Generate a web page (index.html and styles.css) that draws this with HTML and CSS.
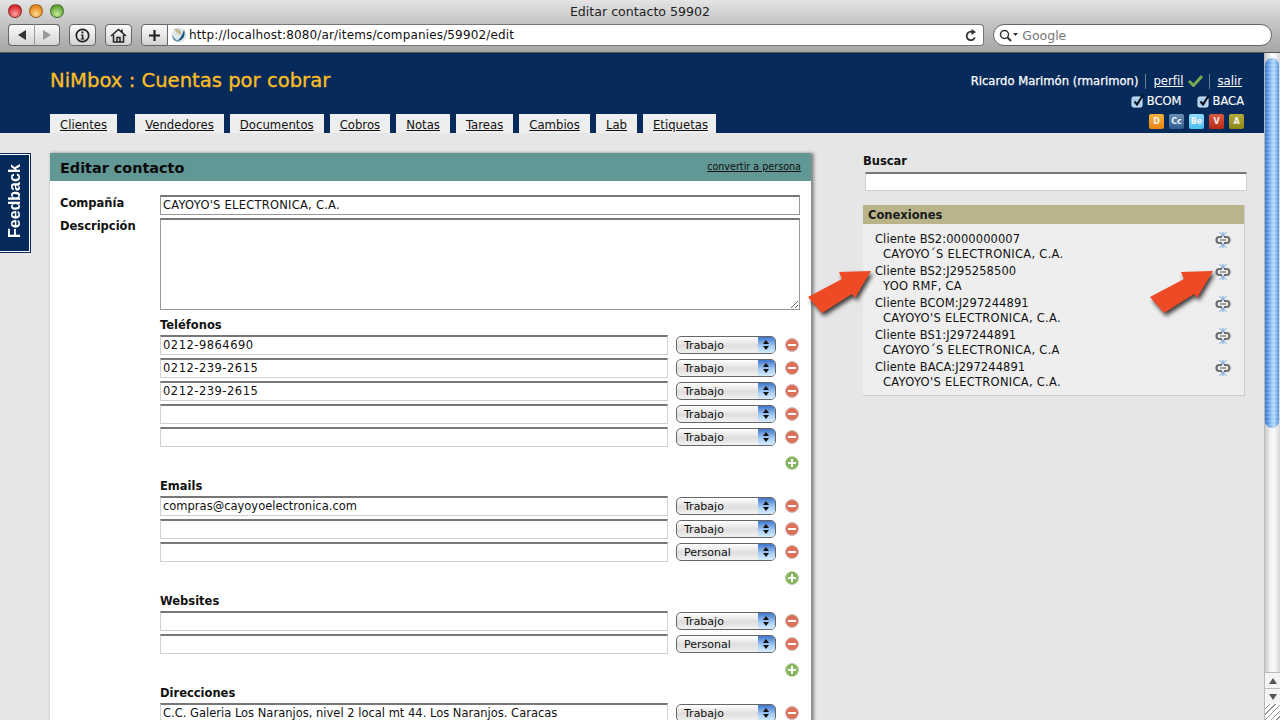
FILE: index.html
```html
<!DOCTYPE html>
<html lang="es">
<head>
    <meta charset="UTF-8">
    <title>Editar contacto 59902</title>
    <link rel="stylesheet" href="styles.css">
</head>
<body>
    <div class="chrome">
        <div class="titlebar">
            <span class="light red"></span>
            <span class="light orange"></span>
            <span class="light green"></span>
            <span class="wintitle">Editar contacto 59902</span>
        </div>
        <div class="toolbar">
            <div class="btn-group">
                <span class="tbtn back"><svg width="12" height="12" viewBox="0 0 12 12"><path d="M2 6 10 1V11Z" fill="#333"/></svg></span>
                <span class="tbtn fwd"><svg width="12" height="12" viewBox="0 0 12 12"><path d="M10 6 2 1V11Z" fill="#999"/></svg></span>
            </div>
            <span class="tbtn single"><svg width="15" height="15" viewBox="0 0 15 15"><circle cx="7.5" cy="7.5" r="6.2" fill="none" stroke="#222" stroke-width="1.7"/><circle cx="7.5" cy="4.4" r="1.1" fill="#222"/><path d="M5.8 6.4H8.4V10.5H9.5V11.5H5.6V10.5H6.8V7.4H5.8Z" fill="#222"/></svg></span>
            <span class="tbtn single"><svg width="17" height="15" viewBox="0 0 17 15"><path d="M1 8 8.5 1.5 16 8M3.5 7V14H13.5V7M7 14V9.5H10V14M12 1.5V4" fill="none" stroke="#222" stroke-width="1.5"/></svg></span>
            <div class="addr">
                <span class="tbtn plus"><svg width="13" height="13" viewBox="0 0 13 13"><path d="M6.5 1V12M1 6.5H12" stroke="#222" stroke-width="2.2"/></svg></span>
                <div class="urlfield">
                    <svg class="favicon" width="16" height="16" viewBox="0 0 16 16"><circle cx="8" cy="8" r="7.5" fill="#dfe6ea"/><path d="M3 2C7 1 11 3 10 8 7 7 5 5 3 2Z" fill="#c2b98c"/><path d="M13 3C15 8 12 14 6 14 9 12 11 9 13 3Z" fill="#1c4f86"/><path d="M1.5 8C3 11 5 13 8 14.500 4 15 1 12 1.500 8Z" fill="#5b93a8"/></svg>
                    <span class="url">http://localhost:8080/ar/items/companies/59902/edit</span>
                    <svg class="reload" width="12" height="13" viewBox="0 0 12 13"><path d="M9.800 8.500A4.200 4.200 0 1 1 7.500 3" fill="none" stroke="#333" stroke-width="1.900"/><path d="M6.500 0 11 3 6.500 6Z" fill="#333"/></svg>
                </div>
            </div>
            <div class="searchfield">
                <svg width="20" height="13" viewBox="0 0 20 13"><circle cx="5.500" cy="5.500" r="4" fill="none" stroke="#333" stroke-width="1.500"/><path d="M8.500 8.500 12 12" stroke="#333" stroke-width="2"/><path d="M14 4H19L16.500 7Z" fill="#333"/></svg>
                <span>Google</span>
            </div>
        </div>
    </div>

    <div class="window">
        <div class="viewport">
            <header class="header">
                <div class="head-left">
                    <h1>NiMbox : Cuentas por cobrar</h1>
                    <nav class="tabs">
                        <a class="tab first">Clientes</a>
                        <a class="tab">Vendedores</a>
                        <a class="tab">Documentos</a>
                        <a class="tab">Cobros</a>
                        <a class="tab">Notas</a>
                        <a class="tab">Tareas</a>
                        <a class="tab">Cambios</a>
                        <a class="tab">Lab</a>
                        <a class="tab">Etiquetas</a>
                    </nav>
                </div>
                <div class="head-right">
                    <div class="userline">
                        <span class="username">Ricardo Marimón (rmarimon)</span>
                        <span class="sep"></span>
                        <a>perfil</a>
                        <svg class="okmark" width="15" height="13" viewBox="0 0 15 13"><path d="M1 7 5.500 11.500 14 2" fill="none" stroke="#7ba653" stroke-width="3"/></svg>
                        <span class="sep"></span>
                        <a>salir</a>
                    </div>
                    <div class="banks">
                        <span class="bank"><svg width="14" height="14" viewBox="0 0 14 14"><rect x="1" y="3" width="10" height="10" rx="1.500" fill="#a5cdf0" stroke="#dfeefa"/><path d="M3.500 7.500 6 10.500 12 1" fill="none" stroke="#0b0f18" stroke-width="2"/></svg>BCOM</span>
                        <span class="bank"><svg width="14" height="14" viewBox="0 0 14 14"><rect x="1" y="3" width="10" height="10" rx="1.500" fill="#a5cdf0" stroke="#dfeefa"/><path d="M3.500 7.500 6 10.500 12 1" fill="none" stroke="#0b0f18" stroke-width="2"/></svg>BACA</span>
                    </div>
                    <div class="badges">
                        <span class="badge b-d">D</span>
                        <span class="badge b-c">Cc</span>
                        <span class="badge b-b">Be</span>
                        <span class="badge b-v">V</span>
                        <span class="badge b-a">A</span>
                    </div>
                </div>
            </header>

            <div class="page">
                <main class="card">
                    <div class="card-head">
                        <h2>Editar contacto</h2>
                        <a>convertir a persona</a>
                    </div>
                    <div class="form">
                        <div class="field">
                            <label>Compañía</label>
                            <input class="wide solid" value="CAYOYO'S ELECTRONICA, C.A.">
                        </div>
                        <div class="field">
                            <label>Descripción</label>
                            <textarea class="wide solid"></textarea>
                        </div>

                        <div class="group">
                            <h3>Teléfonos</h3>
                            <div class="row"><input class="tel" value="0212-9864690"><span class="sel">Trabajo<i></i></span><span class="round minus"></span></div>
                            <div class="row"><input class="tel" value="0212-239-2615"><span class="sel">Trabajo<i></i></span><span class="round minus"></span></div>
                            <div class="row"><input class="tel" value="0212-239-2615"><span class="sel">Trabajo<i></i></span><span class="round minus"></span></div>
                            <div class="row"><input><span class="sel">Trabajo<i></i></span><span class="round minus"></span></div>
                            <div class="row"><input><span class="sel">Trabajo<i></i></span><span class="round minus"></span></div>
                            <div class="addrow"><span class="round add"></span></div>
                        </div>

                        <div class="group">
                            <h3>Emails</h3>
                            <div class="row"><input value="compras@cayoyoelectronica.com"><span class="sel">Trabajo<i></i></span><span class="round minus"></span></div>
                            <div class="row"><input><span class="sel">Trabajo<i></i></span><span class="round minus"></span></div>
                            <div class="row"><input><span class="sel">Personal<i></i></span><span class="round minus"></span></div>
                            <div class="addrow"><span class="round add"></span></div>
                        </div>

                        <div class="group">
                            <h3>Websites</h3>
                            <div class="row"><input><span class="sel">Trabajo<i></i></span><span class="round minus"></span></div>
                            <div class="row"><input><span class="sel">Personal<i></i></span><span class="round minus"></span></div>
                            <div class="addrow"><span class="round add"></span></div>
                        </div>

                        <div class="group">
                            <h3>Direcciones</h3>
                            <div class="row"><input value="C.C. Galeria Los Naranjos, nivel 2 local mt 44. Los Naranjos. Caracas"><span class="sel">Trabajo<i></i></span><span class="round minus"></span></div>
                        </div>
                    </div>
                </main>

                <aside class="side">
                    <label class="search-label">Buscar</label>
                    <input class="search-input">
                    <section class="conn">
                        <h4>Conexiones</h4>
                        <ul>
                            <li><div>Cliente BS2:0000000007<span>CAYOYO´S ELECTRONICA, C.A.</span></div><svg class="chain"><use href="#chain"/></svg></li>
                            <li><div>Cliente BS2:J295258500<span>YOO RMF, CA</span></div><svg class="chain"><use href="#chain"/></svg></li>
                            <li><div>Cliente BCOM:J297244891<span>CAYOYO'S ELECTRONICA, C.A.</span></div><svg class="chain"><use href="#chain"/></svg></li>
                            <li><div>Cliente BS1:J297244891<span>CAYOYO´S ELECTRONICA, C.A</span></div><svg class="chain"><use href="#chain"/></svg></li>
                            <li><div>Cliente BACA:J297244891<span>CAYOYO'S ELECTRONICA, C.A.</span></div><svg class="chain"><use href="#chain"/></svg></li>
                        </ul>
                    </section>
                </aside>
            </div>
        </div>

        <div class="scrollbar">
            <div class="thumb"></div>
            <div class="sb-btn"><b class="up"></b></div>
            <div class="sb-btn"><b class="down"></b></div>
            <div class="grip"></div>
        </div>
    </div>

    <!-- anotaciones sobre la captura -->
    <a class="feedback">Feedback</a>
    <svg class="arrow arrow-left" width="70" height="50" viewBox="0 0 70 50"><path d="M65 3 33 4 36 11 2 29 16 45 46 26 49 30Z" fill="#ef4a26"/></svg>
    <svg class="arrow arrow-right" width="70" height="50" viewBox="0 0 70 50"><path d="M65 3 33 4 36 11 2 29 16 45 46 26 49 30Z" fill="#ef4a26"/></svg>

    <svg width="0" height="0" class="defs">
        <symbol id="chain" viewBox="0 0 16 16">
            <path d="M4.500 0.500 11.500 5M11.500 0.500 4.500 5M8 0V5M4.500 11 11.500 15.500M11.500 11 4.500 15.500M8 11V16" fill="none" stroke="#7fa6e0" stroke-width="1"/>
            <path d="M7 5H4.500A3 3 0 0 0 4.500 11H7M9 5H11.500A3 3 0 0 1 11.500 11H9" fill="none" stroke="#6f6f6f" stroke-width="2.200"/>
            <path d="M5 8H11" stroke="#777" stroke-width="1.300"/>
        </symbol>
    </svg>
</body>
</html>
```

FILE: styles.css
```css
* {
    box-sizing: border-box;
}
html, body {
    margin: 0;
    height: 720px;
    overflow: hidden;
}
body {
    font-family: 'DejaVu Sans', sans-serif;
    font-size: 11.5px;
    color: #111;
    background: #e6e6e6;
    position: relative;
}
a {
    text-decoration: underline;
    color: inherit;
}

/* ventana del navegador */
.chrome {
    height: 53px;
    background: linear-gradient(#e4e4e4, #c4c4c4 45%, #a6a6a6);
    border-bottom: 1px solid #555;
    border-radius: 4px 4px 0 0;
}
.titlebar {
    height: 23px;
    position: relative;
    display: flex;
    align-items: center;
    gap: 7px;
    padding: 0 0 1px 8px;
}
.light {
    width: 14px;
    height: 14px;
    border-radius: 50%;
    border: 1px solid rgba(0, 0, 0, 0.35);
}
.red { background: radial-gradient(circle at 50% 75%, #f9a0a0, #d92c2c 70%); }
.orange { background: radial-gradient(circle at 50% 75%, #fbd98c, #e8861c 70%); }
.green { background: radial-gradient(circle at 50% 75%, #c7ea9b, #62a637 70%); }
.wintitle {
    position: absolute;
    left: 0;
    right: 0;
    text-align: center;
    font-size: 12.6px;
    color: #222;
}
.toolbar {
    height: 23px;
    display: flex;
    align-items: center;
    padding: 1px 8px 0;
    gap: 9px;
}
.tbtn {
    display: flex;
    align-items: center;
    justify-content: center;
    height: 22px;
    border: 1px solid #666;
    border-radius: 4px;
    background: linear-gradient(#fafafa, #d4d4d4);
}
.btn-group {
    display: flex;
}
.back {
    width: 27px;
    border-radius: 4px 0 0 4px;
    border-right: 1px solid #999;
}
.fwd {
    width: 25px;
    border-left: 0;
    border-radius: 0 4px 4px 0;
}
.single {
    width: 27px;
}
.addr {
    display: flex;
    width: 844px;
}
.plus {
    width: 27px;
    border-radius: 4px 0 0 4px;
    flex: none;
}
.urlfield {
    flex: 1;
    height: 22px;
    display: flex;
    align-items: center;
    gap: 2px;
    padding: 0 6px 0 3px;
    background: #fff;
    border: 1px solid #777;
    border-left: 0;
    border-radius: 0 4px 4px 0;
}
.url {
    flex: 1;
    font-size: 12px;
    letter-spacing: 0.15px;
    color: #111;
}
.searchfield {
    width: 279px;
    height: 22px;
    display: flex;
    align-items: center;
    gap: 3px;
    padding: 0 5px;
    background: #fff;
    border: 1px solid #666;
    border-radius: 11px;
    font-size: 12.5px;
    color: #777;
}

.window {
    display: flex;
    height: 667px;
}
.viewport {
    flex: 1;
    min-width: 0;
    overflow: hidden;
}

/* cabecera */
.header {
    height: 80px;
    background: #062a5a;
    display: flex;
    justify-content: space-between;
    padding: 0 20px 0 50px;
}
.head-left {
    display: flex;
    flex-direction: column;
    justify-content: space-between;
}
h1 {
    margin: 17px 0 0;
    font-size: 19.6px;
    line-height: 22px;
    font-weight: normal;
    color: #f9bd25;
    -webkit-text-stroke: 0.35px #f9bd25;
}
.tabs {
    display: flex;
    gap: 6px;
}
.tab {
    height: 19px;
    line-height: 23px;
    padding: 0 10px;
    background: #eee;
    font-size: 11.7px;
    color: #111;
}
.tab.first {
    margin-right: 12px;
}
.tab:last-child {
    padding-right: 8px;
}
.head-right {
    display: flex;
    flex-direction: column;
    align-items: flex-end;
    color: #fff;
}
.userline {
    display: flex;
    align-items: center;
    gap: 7px;
    margin-top: 20px;
    height: 16px;
    padding-right: 2px;
    font-size: 11.7px;
}
.username {
    font-size: 11.6px;
    font-weight: normal;
    -webkit-text-stroke: 0.25px #fff;
}
.okmark {
    margin: -2px -1px 0 -2px;
}
.sep {
    width: 1px;
    height: 15px;
    background: #6f7f8f;
}
.banks {
    display: flex;
    gap: 15px;
    margin-top: 4px;
    height: 16px;
    -webkit-text-stroke: 0.15px #fff;
}
.bank {
    display: flex;
    align-items: center;
    gap: 2px;
}
.badges {
    display: flex;
    gap: 5px;
    margin-top: 5px;
}
.badge {
    width: 15px;
    height: 15px;
    border-radius: 2px;
    font-size: 8px;
    line-height: 15px;
    font-weight: bold;
    text-align: center;
    color: #f2f2f2;
}
.b-d { background: linear-gradient(#f7b03c, #e98512); }
.b-c { background: linear-gradient(#6a8fb8, #2f5c8f); }
.b-b { background: linear-gradient(#8fdcfb, #4bbcf0); }
.b-v { background: linear-gradient(#dc5a3c, #b82a18); }
.b-a { background: linear-gradient(#b3ac3a, #8c8618); }

/* cuerpo */
.page {
    display: flex;
    align-items: flex-start;
    padding: 20px 0 0 50px;
}
.card {
    width: 761px;
    height: 600px;
    flex: none;
    background: #fff;
    box-shadow: 2px 1px 3px 1px #888;
}
.card-head {
    height: 28px;
    display: flex;
    justify-content: space-between;
    align-items: center;
    padding: 1px 10px 0;
    background: #619795;
}
h2 {
    margin: 0;
    font-size: 14.4px;
    font-weight: bold;
    color: #0a0a0a;
}
.card-head a {
    font-size: 9.6px;
    color: #111;
    margin-top: -2px;
}
.form {
    padding: 14px 10px 0;
}
.field {
    display: flex;
    margin-bottom: 3px;
}
.field label {
    width: 100px;
    flex: none;
    font-weight: bold;
    line-height: 17px;
}
input, textarea {
    font: inherit;
    font-size: 11.5px;
    color: #111;
    background: #fff;
    padding: 0 2px 2px;
    border: 1px solid #d0d0d0;
    border-top: 2px solid #777;
    outline: none;
    border-radius: 0;
}
.wide {
    width: 640px;
    height: 20px;
    letter-spacing: 0.24px;
}
.wide.solid {
    border: 1px solid #999;
    border-top: 2px solid #777;
}
textarea.wide {
    height: 92px;
    margin-bottom: 3px;
    display: block;
}
.group {
    margin-left: 100px;
}
h3 {
    margin: 0 0 2px;
    font-size: 11.5px;
    line-height: 16px;
    font-weight: bold;
}
.field + .group {
    margin-top: 4px;
}
.row {
    display: flex;
    align-items: center;
    height: 20px;
    margin-bottom: 3px;
}
.row input {
    width: 508px;
    height: 20px;
    margin-right: 8px;
}
.row input.tel {
    letter-spacing: 0.5px;
}
.sel {
    position: relative;
    width: 100px;
    height: 18px;
    line-height: 17px;
    padding-left: 7px;
    font-size: 11px;
    border: 1px solid #666;
    border-radius: 5px;
    background: linear-gradient(#fff, #dedede 55%, #f2f2f2);
    margin-right: 9px;
    overflow: hidden;
}
.sel i {
    position: absolute;
    top: 0;
    right: 0;
    bottom: 0;
    width: 17px;
    background: linear-gradient(#3f74c8, #a9d0f7 60%, #d8ecfd);
}
.sel i::before, .sel i::after {
    content: "";
    position: absolute;
    left: 5px;
    border-left: 3px solid transparent;
    border-right: 3px solid transparent;
}
.sel i::before {
    top: 3px;
    border-bottom: 4px solid #111;
}
.sel i::after {
    bottom: 3px;
    border-top: 4px solid #111;
}
.round {
    position: relative;
    width: 14px;
    height: 14px;
    border-radius: 50%;
    flex: none;
}
.minus {
    background: #de6f5b;
    border: 1px solid #c9c0b8;
}
.minus::before {
    content: "";
    position: absolute;
    left: 2px;
    right: 2px;
    top: 5px;
    height: 2px;
    background: #fff;
}
.add {
    background: #86b25c;
    border: 1px solid #bcd0a6;
}
.add::before, .add::after {
    content: "";
    position: absolute;
    background: #fff;
}
.add::before {
    left: 2px;
    right: 2px;
    top: 5px;
    height: 2px;
}
.add::after {
    top: 2px;
    bottom: 2px;
    left: 5px;
    width: 2px;
}
.addrow {
    display: flex;
    justify-content: flex-end;
    align-items: center;
    height: 16px;
    margin-top: 8px;
    margin-bottom: 7px;
    padding-right: 2px;
}

/* columna derecha */
.side {
    width: 384px;
    margin-left: 52px;
    display: flex;
    flex-direction: column;
}
.search-label {
    font-weight: bold;
    line-height: 17px;
}
.search-input {
    width: 382px;
    height: 19px;
    margin: 2px 0 14px 2px;
}
.conn {
    width: 382px;
    background: #eee;
    border-right: 1px solid #ccc;
    border-bottom: 1px solid #ccc;
}
h4 {
    margin: 0;
    height: 19px;
    line-height: 21px;
    padding-left: 5px;
    background: #b9b48a;
    font-size: 11.5px;
    font-weight: bold;
    color: #1a1a1a;
}
.conn ul {
    list-style: none;
    margin: 0;
    padding: 8px 13px 3px 12px;
}
.conn li {
    display: flex;
    justify-content: space-between;
    height: 32px;
    line-height: 15px;
    letter-spacing: 0.08px;
}
.conn li span {
    display: block;
    padding-left: 8px;
    letter-spacing: 0.28px;
}
.chain {
    width: 16px;
    height: 16px;
}

/* barra de desplazamiento */
.scrollbar {
    width: 16px;
    flex: none;
    display: flex;
    flex-direction: column;
    background: linear-gradient(90deg, #c9c9c9, #f5f5f5 40%, #fafafa 60%, #d8d8d8);
    border-left: 1px solid #bbb;
}
.thumb {
    height: 370px;
    margin: 5px 1px 244px 0;
    border-radius: 8px;
    background:
        repeating-linear-gradient(#0000 0 2px, rgba(255, 255, 255, 0.14) 2px 4px),
        linear-gradient(90deg, #2f6fcf, #8fc0f5 45%, #b5daf9 65%, #4a8ee0);
}
.sb-btn {
    height: 16px;
    display: flex;
    align-items: center;
    justify-content: center;
    border-top: 1px solid #bbb;
    background: #f4f4f4;
}
.sb-btn b {
    border-left: 4px solid transparent;
    border-right: 4px solid transparent;
}
.up { border-bottom: 6px solid #555; }
.down { border-top: 6px solid #555; }
.grip {
    flex: 1;
    background: repeating-linear-gradient(135deg, #fff 0 3px, #999 3px 4px);
}

/* elementos superpuestos */
.feedback {
    position: absolute;
    left: 0;
    top: 154px;
    width: 30px;
    height: 98px;
    padding-top: 4px;
    display: flex;
    align-items: center;
    justify-content: center;
    writing-mode: vertical-rl;
    transform: rotate(180deg);
    background: #062a5a;
    border: 1px solid #fff;
    border-right: 0;
    box-shadow: 0 0 0 1px #062a5a;
    font-family: 'Liberation Sans', sans-serif;
    font-size: 16px;
    font-weight: bold;
    color: #fff;
    text-decoration: none;
}
.arrow {
    position: absolute;
    top: 268px;
    overflow: visible;
    filter: drop-shadow(2px 3px 2px rgba(0, 0, 0, 0.75));
}
.arrow-left { left: 806px; }
.arrow-right { left: 1148px; }
.defs {
    position: absolute;
}
```
